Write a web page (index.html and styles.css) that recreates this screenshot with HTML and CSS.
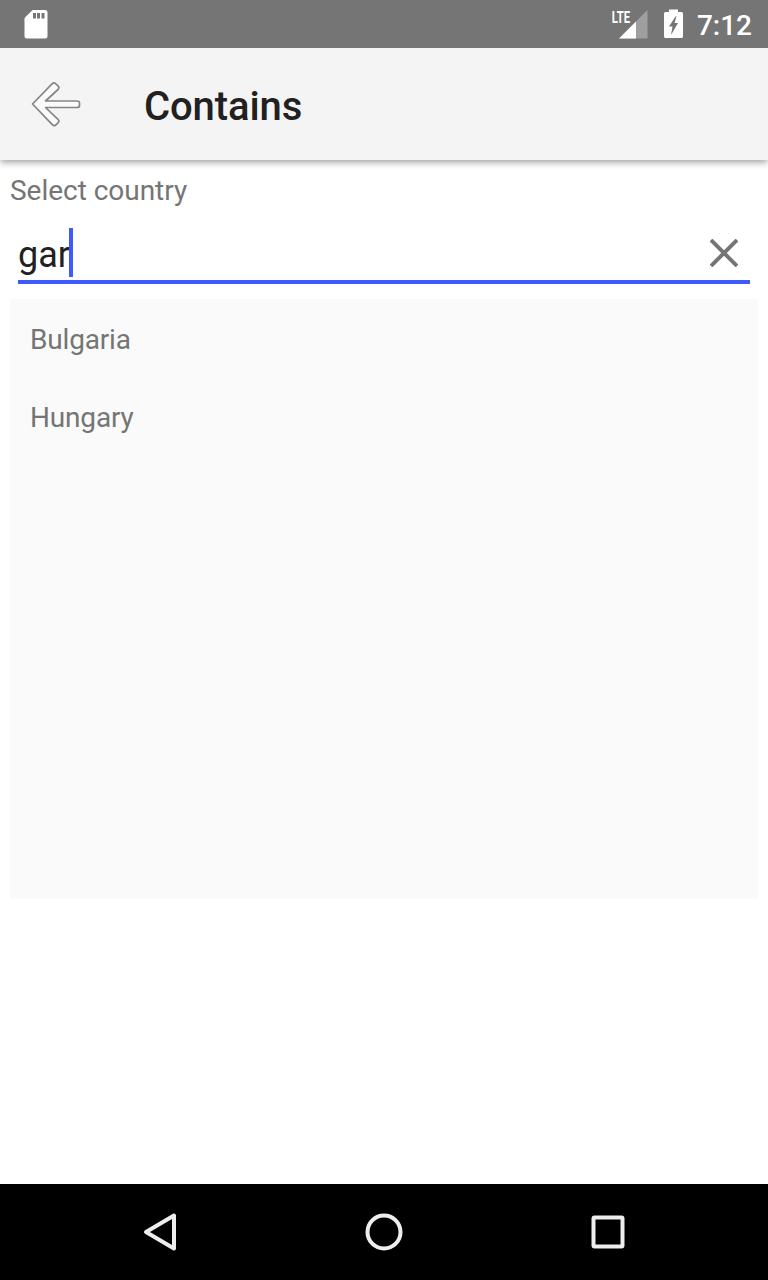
FILE: index.html
```html
<!DOCTYPE html>
<html lang="en">
<head>
<meta charset="utf-8">
<title>Contains</title>
<link rel="stylesheet" href="styles.css">
</head>
<body>
<div class="screen">
  <div class="status-bar">
    <svg class="sd" width="24" height="29" viewBox="0 0 24 29"><path fill="#fff" fill-rule="evenodd" d="M8.600 0H21Q23.500 0 23.500 2.500V26Q23.500 28.500 21 28.500H3Q.5 28.500 .5 26V9Q.5 8 1.200 7.300ZM9 3V8.500H12V3ZM13 3V8.500H16V3ZM17.500 3V8.500H20.500V3Z"/></svg>
    <div class="status-right">
      <svg class="signal" width="40" height="39" viewBox="-4 -9 40 39"><path fill="#9f9f9f" d="M35.500 1V29.500H7Z"/><path fill="#fff" d="M24 12.500V29.500H7Z"/><text class="lte" x="-.2" y="13.500" textLength="18.200" lengthAdjust="spacingAndGlyphs">LTE</text></svg>
      <svg class="battery" width="20" height="30" viewBox="0 0 20 30"><path fill="#fff" fill-rule="evenodd" d="M5 .5H14V3H17.500Q19 3 19 4.500V27.500Q19 29 17.500 29H1.500Q0 29 0 27.500V4.500Q0 3 1.500 3H5ZM11.500 7.500L5 17.500H8.500L7 26L14 14H10.500L12.500 7.500Z"/></svg>
      <span class="clock">7:12</span>
    </div>
  </div>
  <header class="app-bar">
    <svg class="back" width="52" height="50" viewBox="0 0 52 50"><path d="M2.500 25L22.300 4.700Q24 3 25.800 4.800L28 6.900Q29.800 8.700 28 10.500L15.500 22H47Q49.500 22 49.500 24V26.500Q49.500 28.500 47 28.500H15.500L28 40.300Q29.800 42 28 43.800L25.800 46Q24 47.500 22.300 45.700Z" transform="translate(-1 -1)" fill="#fafafa" stroke="#858585" stroke-width="1.700" stroke-linejoin="round"/></svg>
    <h1 class="title">Contains</h1>
  </header>
  <main class="content">
    <div class="label">Select country</div>
    <div class="field">
      <span class="value">gar</span><span class="caret"></span>
      <svg class="clear" width="28" height="28" viewBox="0 0 28 28"><path d="M1 1L27 27M27 1L1 27" stroke="#757575" stroke-width="3.900"/></svg>
    </div>
    <div class="list">
      <div class="item">Bulgaria</div>
      <div class="item">Hungary</div>
    </div>
  </main>
  <nav class="nav-bar">
    <svg width="224" height="96" viewBox="48 0 224 96"><path d="M146 48L174 31.500V64.500Z"/></svg>
    <svg width="224" height="96" viewBox="0 0 224 96"><circle cx="112" cy="48" r="16.500"/></svg>
    <svg width="224" height="96" viewBox="0 0 224 96"><rect x="97.500" y="33.500" width="29" height="29" rx="1"/></svg>
  </nav>
</div>
</body>
</html>
```
FILE: styles.css
```css
* { box-sizing: border-box; }
body { margin: 0; font-family: Roboto, sans-serif; background: #fff; }
svg { display: block; flex: none; }
.screen { width: 768px; height: 1280px; display: flex; flex-direction: column; overflow: hidden; }
.status-bar { height: 48px; flex: none; z-index: 1; display: flex; justify-content: space-between; align-items: flex-start; background: #757575; padding: 0 16px 0 24px; }
.sd { margin-top: 10px; }
.status-right { display: flex; align-items: flex-start; }
.signal { margin-right: 16px; }
.battery { margin-top: 9px; margin-right: 13px; }
.lte { font: 700 17px Roboto, sans-serif; fill: #fff; }
.clock { color: #fff; font-size: 28px; font-weight: 500; line-height: 51px; }
.app-bar { height: 112px; flex: none; display: flex; align-items: flex-start; background: #f4f4f4; padding-left: 31px; box-shadow: 0 2px 7px rgba(0, 0, 0, .4); }
.back { margin-top: 32px; }
.title { margin: 0 0 0 61px; color: #212121; font-size: 40px; font-weight: 500; line-height: 118px; letter-spacing: -.1px; }
.content { flex: 1; padding: 14px 10px 0; }
.label { color: #757575; font-size: 28px; line-height: 33px; height: 54px; letter-spacing: -.03px; }
.field { height: 56px; margin: 0 8px 15px; display: flex; align-items: flex-start; border-bottom: 4px solid #3d5afe; }
.value { color: #212121; font-size: 36px; line-height: 54px; width: 51px; white-space: nowrap; }
.caret { width: 4px; height: 49px; background: #3d5afe; }
.clear { margin: 11px 12px 0 auto; }
.list { height: 600px; background: #fafafa; border-radius: 2px; padding: 2px 20px 0; }
.item { height: 78px; color: #757575; font-size: 28px; line-height: 78px; letter-spacing: -.18px; }
.nav-bar { height: 96px; flex: none; display: flex; justify-content: center; background: #000; }
.nav-bar svg { fill: none; stroke: #eee; stroke-width: 4px; stroke-linejoin: round; }
```
